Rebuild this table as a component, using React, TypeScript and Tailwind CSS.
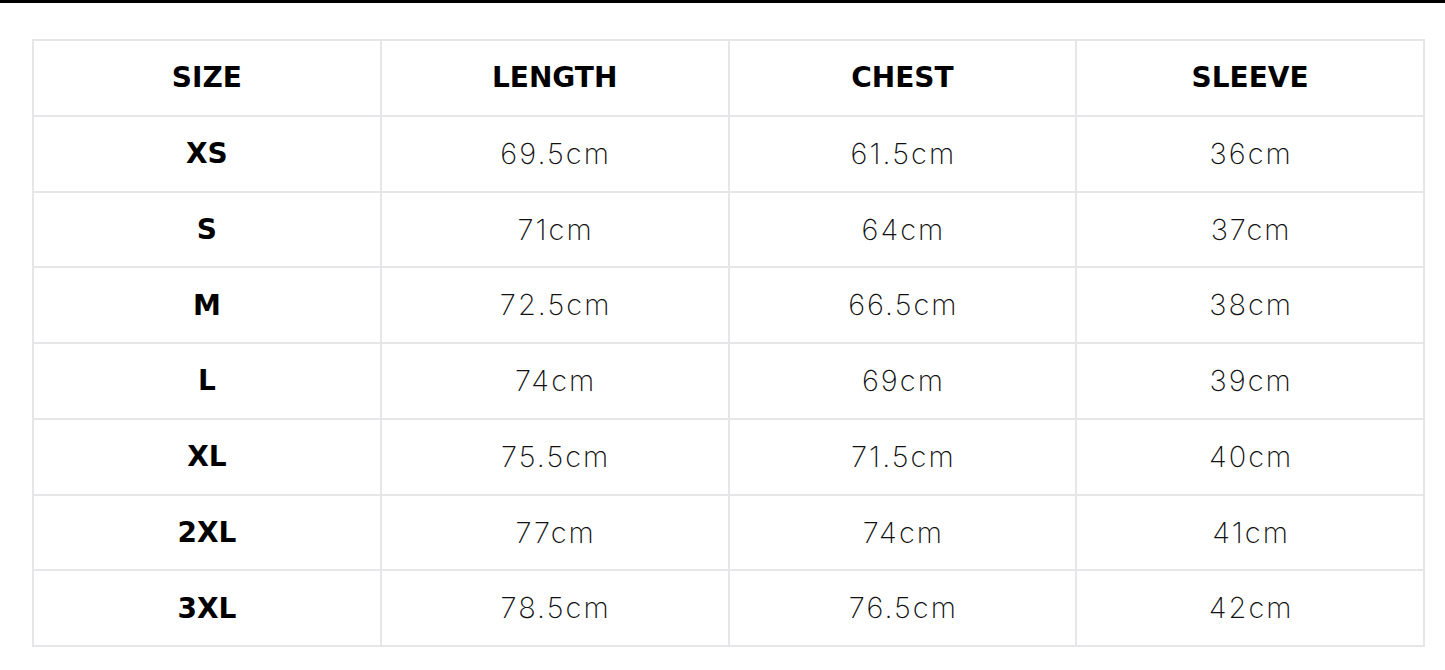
import React from 'react';

const rows = [
  ['XS', '69.5cm', '61.5cm', '36cm'],
  ['S', '71cm', '64cm', '37cm'],
  ['M', '72.5cm', '66.5cm', '38cm'],
  ['L', '74cm', '69cm', '39cm'],
  ['XL', '75.5cm', '71.5cm', '40cm'],
  ['2XL', '77cm', '74cm', '41cm'],
  ['3XL', '78.5cm', '76.5cm', '42cm'],
];

const headers = ['SIZE', 'LENGTH', 'CHEST', 'SLEEVE'];

const cell = 'flex h-[75.75px] items-center justify-center border-r-2 border-b-2 border-[#e6e6e9]';
const bold = "font-['DejaVu_Sans',sans-serif] text-[28px] font-bold text-black pt-[1px]";
const light = "font-['Inter',sans-serif] text-[29px] font-extralight tracking-[0.07em] pl-[0.07em] text-[#111]";

export default function App() {
  return (
    <div className="min-h-[670px] bg-white">
      <div className="h-[3px] bg-black" />
      <div className="pl-[32px] pr-[20px] pt-[36px]">
        <div className="grid grid-cols-4 border-t-2 border-l-2 border-[#e6e6e9]">
          {headers.map((h) => (
            <div key={h} className={`${cell} ${bold}`}>
              {h}
            </div>
          ))}
          {rows.map((row) =>
            row.map((value, i) => (
              <div key={row[0] + i} className={`${cell} ${i === 0 ? bold : light}`}>
                {value}
              </div>
            ))
          )}
        </div>
      </div>
    </div>
  );
}
